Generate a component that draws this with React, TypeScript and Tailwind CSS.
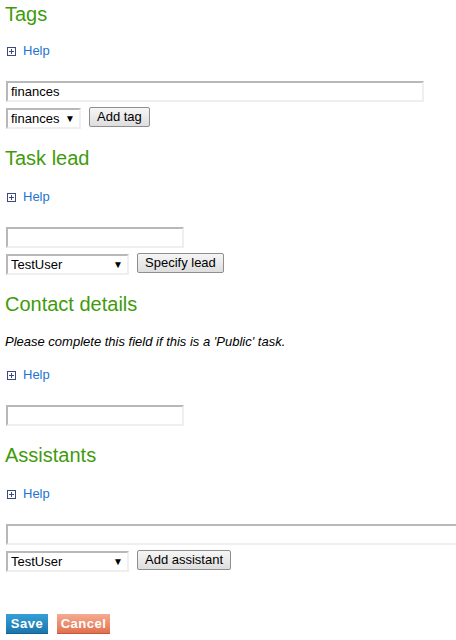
const HelpIcon = () => (
  <svg width="9" height="9" viewBox="0 0 9 9" className="shrink-0">
    <rect x="0.5" y="0.5" width="8" height="8" fill="#fff" stroke="#3b4a7a" />
    <path d="M2 4.5h5M4.5 2v5" stroke="#3b4a7a" strokeWidth="1" />
  </svg>
);

const inset = "border-2 border-t-[#b8b8b8] border-l-[#b8b8b8] border-b-[#efefef] border-r-[#efefef] bg-white";

function Heading({ children, first }: { children: string; first?: boolean }) {
  return (
    <h2 className={`${first ? "mt-[2px]" : "mt-[17px]"} -ml-[1px] text-[20px] leading-[24px] text-[#3f9b0b]`}>
      {children}
    </h2>
  );
}

function Help({ top = "mt-[17px]" }: { top?: string }) {
  return (
    <div className={`${top} flex items-center gap-[7px] pl-[1px] h-[16px]`}>
      <HelpIcon />
      <a className="text-[13px] leading-[16px] text-[#2473d3] cursor-pointer">Help</a>
    </div>
  );
}

function TextInput({ width, value = "" }: { width: string; value?: string }) {
  return (
    <div className={`mt-[22px] h-[21px] ${width} ${inset} pl-[3px] text-[13px] leading-[17px] text-black shrink-0`}>
      {value}
    </div>
  );
}

function FakeSelect({ width, value }: { width: string; value: string }) {
  return (
    <div className={`h-[21px] ${width} ${inset} flex items-center justify-between pl-[3px] pr-[4px] text-[13px]`}>
      <span>{value}</span>
      <span className="text-[10px] leading-none">▼</span>
    </div>
  );
}

function GrayButton({ children }: { children: string }) {
  return (
    <button
      type="button"
      className="h-[20px] -mt-[1px] px-[7px] border border-[#8e8e8e] rounded-[2px] bg-gradient-to-b from-[#f6f6f6] to-[#dedede] text-[13px] leading-[18px] text-black"
    >
      {children}
    </button>
  );
}

function SelectRow({ width, value, label }: { width: string; value: string; label: string }) {
  return (
    <div className="mt-[6px] flex items-start gap-[8px]">
      <FakeSelect width={width} value={value} />
      <GrayButton>{label}</GrayButton>
    </div>
  );
}

export default function App() {
  return (
    <div
      className="w-[456px] h-[640px] overflow-hidden bg-white pl-[6px] text-black"
      style={{ fontFamily: '"Liberation Sans", Arial, sans-serif' }}
    >
      <Heading first>Tags</Heading>
      <Help />
      <TextInput width="w-[418px]" value="finances" />
      <SelectRow width="w-[75px]" value="finances" label="Add tag" />

      <Heading>Task lead</Heading>
      <Help top="mt-[19px]" />
      <TextInput width="w-[178px]" />
      <SelectRow width="w-[123px]" value="TestUser" label="Specify lead" />

      <Heading>Contact details</Heading>
      <p className="-ml-[1px] mt-[18px] text-[13px] leading-[16px] italic">
        Please complete this field if this is a 'Public' task.
      </p>
      <Help />
      <TextInput width="w-[178px]" />

      <Heading>Assistants</Heading>
      <Help top="mt-[19px]" />
      <TextInput width="w-[470px]" />
      <SelectRow width="w-[123px]" value="TestUser" label="Add assistant" />

      <div className="mt-[42px] flex gap-[9px]">
        <button
          type="button"
          className="h-[20px] w-[42px] bg-gradient-to-b from-[#35a0d6] to-[#1c75ad] border-b border-[#15618f] text-white font-bold text-[13px] leading-[19px] tracking-[0.5px]"
        >
          Save
        </button>
        <button
          type="button"
          className="h-[20px] w-[53px] bg-gradient-to-b from-[#f5ab90] to-[#e0714f] border-b border-[#c65a38] text-white font-bold text-[13px] leading-[19px] tracking-[0.5px]"
        >
          Cancel
        </button>
      </div>
    </div>
  );
}
